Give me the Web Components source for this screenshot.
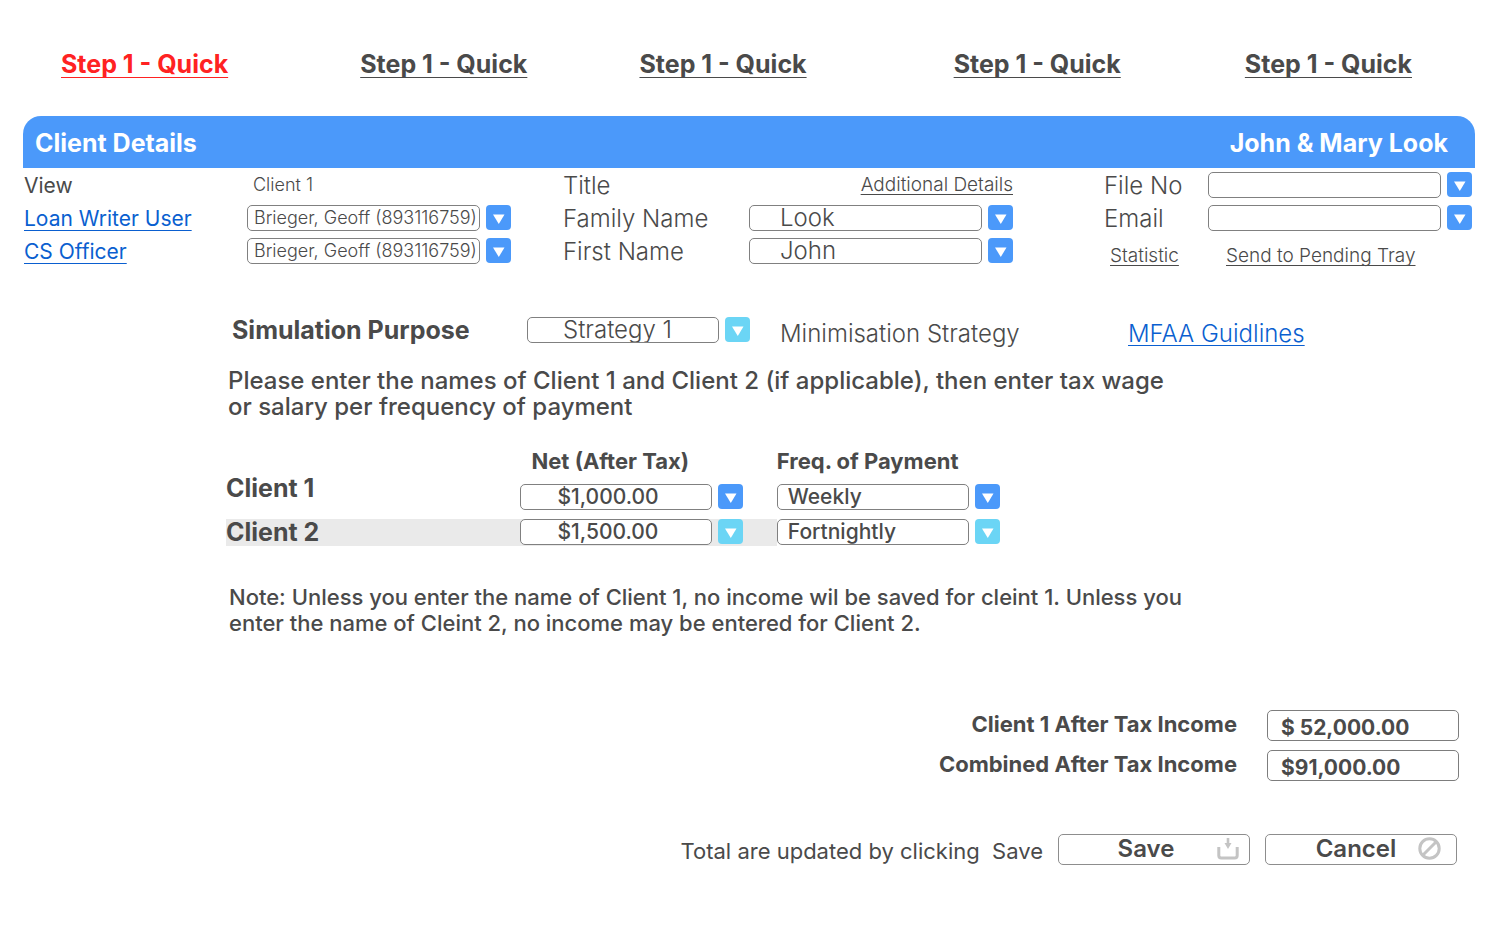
<!DOCTYPE html>
<html lang="en">
<head>
<meta charset="utf-8">
<title>Client Details</title>
<style>
  body { margin: 0; background: #fff; color: #4a4a4a; font-family: Inter, "Open Sans", sans-serif; }
</style>
</head>
<body>
<client-page></client-page>
<script>
const define = (name, html, setup) => {
  const template = document.createElement('template');
  template.innerHTML = html;
  customElements.define(name, class extends HTMLElement {
    constructor() {
      super();
      this.attachShadow({ mode: 'open' }).append(template.content.cloneNode(true));
    }
    connectedCallback() { if (setup) setup(this, this.shadowRoot); }
  });
};

const picker = `
  <div class="pick">
    <select id="control"><option></option></select>
    <button type="button" aria-label="Open list"><svg viewBox="0 0 25 25" width="25" height="25" aria-hidden="true"><path d="M7 9.500h11.500L12.800 19z" fill="#fff"/></svg></button>
  </div>`;
const pickerCss = `
  * { box-sizing: border-box; }
  .pick { display: flex; gap: 6px; align-items: flex-start; width: 100%; max-width: var(--pick-width, 264px); }
  select { flex: 1; min-width: 0; height: 26px; margin: 0; padding: 0 0 0 var(--inset, 6px); border: 1px solid #808080; border-radius: 5px;
    background: #fff; color: inherit; font: var(--value-font, 300 18px/24px Inter, sans-serif); appearance: none; }
  .pick button { flex: none; width: 25px; height: 25px; padding: 0; border: 0; border-radius: 4px; background: var(--arrow, #4b99fa); }
  svg { display: block; }`;
const setupPicker = (host, root) => {
  const select = root.querySelector('select');
  select.options[0].textContent = host.getAttribute('value') || '';
  const name = host.getAttribute('name');
  if (name) select.setAttribute('aria-label', name);
  root.querySelector('button').onclick = () => select.showPicker();
};

define('step-link', `
  <style>
    :host { display: block; }
    a { color: inherit; font: 700 25px/28px Inter, sans-serif; text-decoration: underline; text-decoration-thickness: 1px; text-underline-offset: 4px; text-decoration-skip-ink: none; white-space: nowrap; }
  </style>
  <a href="#"><slot></slot></a>`);

define('text-link', `
  <style>
    :host { display: inline-block; font-size: 19px; line-height: 22px; font-weight: 300; white-space: nowrap; }
    :host([kind="main"]) { color: #0a5fd0; font-size: 24px; line-height: 26px; }
    a { color: inherit; text-decoration: underline; text-decoration-thickness: 1px; text-underline-offset: 3px; text-decoration-skip-ink: none; }
  </style>
  <a href="#"><slot></slot></a>`);

define('pick-list', `<style>:host { display: block; }${pickerCss}</style>${picker}`, setupPicker);

define('pick-field', `
  <style>
    :host { display: contents; }
    ${pickerCss}
    label { padding-top: 2px; font-size: 24px; line-height: 26px; white-space: nowrap; }
    :host([linked]) label { color: #0a5fd0; font-size: 21px; font-weight: 400; }
    a { color: inherit; text-decoration: underline; text-decoration-thickness: 1px; text-underline-offset: 4px; text-decoration-skip-ink: none; }
  </style>
  <label for="control"><slot></slot></label>${picker}`, (host, root) => {
  setupPicker(host, root);
  if (host.hasAttribute('linked')) {
    const label = root.querySelector('label');
    const link = document.createElement('a');
    link.href = '#';
    link.append(label.firstChild);
    label.append(link);
  }
});

define('panel-header', `
  <style>
    :host { display: flex; justify-content: space-between; align-items: center; box-sizing: border-box; height: 52px; padding: 2px 27px 0 12px; border-radius: 18px 18px 0 0; background: #4b99fa; color: #fff; }
    h1, ::slotted(span) { margin: 0; font: 700 25px/30px Inter, sans-serif; }
  </style>
  <h1><slot></slot></h1><slot name="names"></slot>`);

define('client-details', `
  <style>
    :host { display: grid; grid-template-columns: 223fr 316fr 186fr 355fr 104fr 264fr; grid-auto-rows: 33px; align-items: center; padding: 0 3px 0 1px; font-weight: 300; }
    .label { padding-top: 2px; font-size: 24px; line-height: 26px; }
    .view { font-size: 21px; font-weight: 400; }
    .small { font-size: 18px; line-height: 22px; padding-left: 6px; }
    .more { justify-self: start; width: 264px; text-align: right; }
    .low { align-self: end; }
    .low.indent { padding-left: 6px; }
    .low.wide { padding-left: 18px; }
    .big { --inset: 30px; --value-font: 300 24px/24px Inter, sans-serif; }
  </style>
  <span class="label view">View</span><span class="small">Client 1</span>
  <span class="label">Title</span><text-link class="more">Additional Details</text-link>
  <pick-field>File No</pick-field>
  <pick-field linked value="Brieger, Geoff (893116759)">Loan Writer User</pick-field>
  <pick-field class="big" value="Look">Family Name</pick-field>
  <pick-field>Email</pick-field>
  <pick-field linked value="Brieger, Geoff (893116759)">CS Officer</pick-field>
  <pick-field class="big" value="John">First Name</pick-field>
  <text-link class="low indent">Statistic</text-link><text-link class="low wide">Send to Pending Tray</text-link>`);

define('simulation-purpose', `
  <style>
    :host { display: block; --pick-width: 223px; }
    .row { display: grid; grid-template-columns: 301fr 253fr 348fr 347fr; align-items: center; }
    h2 { margin: 0; padding-left: 6px; font: 700 25px/30px Inter, sans-serif; }
    pick-list { --arrow: #6bd5f5; --inset: 35px; --value-font: 300 24px/24px Inter, sans-serif; }
    .row > span { font-size: 24px; line-height: 26px; font-weight: 300; padding-top: 8px; }
    .row > text-link { padding-top: 8px; }
    p { margin: 21px 0 0; padding-left: 2px; font: 500 24px/26px Inter, sans-serif; }
  </style>
  <div class="row">
    <h2>Simulation Purpose</h2>
    <pick-list name="Simulation Purpose" value="Strategy 1"></pick-list>
    <span>Minimisation Strategy</span>
    <text-link kind="main">MFAA Guidlines</text-link>
  </div>
  <p>Please enter the names of Client 1 and Client 2 (if applicable), then enter tax wage<br>or salary per frequency of payment</p>`);

define('income-table', `
  <style>
    :host { display: block; --pick-width: 223px; --value-font: 500 21px/24px Inter, sans-serif; }
    table { width: 100%; table-layout: fixed; border-collapse: collapse; }
    th, td { box-sizing: border-box; padding: 0; text-align: left; vertical-align: top; }
    thead th { height: 27px; font: 700 22px/26px Inter, sans-serif; white-space: nowrap; }
    thead span { padding-left: 12px; }
    tbody th { font: 700 25px/26px Inter, sans-serif; }
    .name { width: 23.5%; }
    .net { width: 20.6%; }
    .first td { height: 44px; padding-top: 9px; }
    .second td { height: 27px; }
    .second .shade { background: #eaeaea; }
    .second { --arrow: #6bd5f5; }
    td.net { --inset: 37px; }
    td.freq { --inset: 10px; }
  </style>
  <table>
    <thead><tr><td class="name"></td><th class="net" scope="col"><span>Net (After Tax)</span></th><th scope="col">Freq. of Payment</th></tr></thead>
    <tbody>
      <tr class="first"><th scope="row">Client 1</th>
        <td class="net"><pick-list name="Client 1 net" value="$1,000.00"></pick-list></td>
        <td class="freq"><pick-list name="Client 1 frequency" value="Weekly"></pick-list></td></tr>
      <tr class="second"><th class="shade" scope="row">Client 2</th>
        <td class="net shade"><pick-list name="Client 2 net" value="$1,500.00"></pick-list></td>
        <td class="freq"><pick-list name="Client 2 frequency" value="Fortnightly"></pick-list></td></tr>
    </tbody>
  </table>`);

define('total-field', `
  <style>
    :host { display: flex; justify-content: flex-end; align-items: flex-start; gap: 30px; }
    label { font: 700 22px/28px Inter, sans-serif; }
    input { box-sizing: border-box; width: 192px; height: 31px; margin: 0; padding: 3px 0 0 13px; border: 1px solid #7d7d7d; border-radius: 5px; background: #fff; color: inherit; font: 700 21px/26px Inter, sans-serif; }
  </style>
  <label for="total"><slot></slot></label><input id="total" readonly>`, (host, root) => {
  root.querySelector('input').value = host.getAttribute('value');
});

define('action-button', `
  <style>
    :host { display: block; }
    button { display: flex; align-items: center; box-sizing: border-box; width: 192px; height: 31px; padding: 0 10px 2px 16px; border: 1px solid #8d8d8d; border-radius: 5px; background: #fff; color: inherit; font: 600 24px/28px Inter, sans-serif; }
    .label { flex: 1; text-align: center; }
    ::slotted(svg) { display: block; flex: none; }
    :host([inset]) button { padding: 0 15px 2px 28px; }
  </style>
  <button type="button"><span class="label"><slot></slot></span><slot name="icon"></slot></button>`);

define('client-page', `
  <style>
    :host { display: block; padding: 50px 25px 80px 23px; }
    nav { display: grid; grid-template-columns: 300fr 280fr 315fr 292fr 164fr; padding: 0 63px 0 38px; margin-bottom: 38px; }
    .active { color: #ff2222; }
    section { margin-left: 203px; }
    simulation-purpose { margin-top: 46px; }
    income-table { margin-top: 28px; }
    .note { margin: 38px 0 0; padding-left: 3px; font: 500 22px/26px Inter, sans-serif; }
    .totals { display: grid; gap: 9px; margin-top: 74px; padding-right: 16px; }
    .actions { display: flex; justify-content: flex-end; align-items: center; gap: 15px; margin-top: 53px; padding-right: 18px; }
    .actions p { margin: 0; padding-top: 3px; font: 400 22px/26px Inter, sans-serif; white-space: pre; }
  </style>
  <nav>
    <step-link class="active">Step 1 - Quick</step-link>
    <step-link>Step 1 - Quick</step-link>
    <step-link>Step 1 - Quick</step-link>
    <step-link>Step 1 - Quick</step-link>
    <step-link>Step 1 - Quick</step-link>
  </nav>
  <panel-header>Client Details<span slot="names">John &amp; Mary Look</span></panel-header>
  <client-details></client-details>
  <section>
    <simulation-purpose></simulation-purpose>
    <income-table></income-table>
    <p class="note">Note: Unless you enter the name of Client 1, no income wil be saved for cleint 1. Unless you<br>enter the name of Cleint 2, no income may be entered for Client 2.</p>
  </section>
  <div class="totals">
    <total-field value="$ 52,000.00">Client 1 After Tax Income</total-field>
    <total-field value="$91,000.00">Combined After Tax Income</total-field>
  </div>
  <div class="actions">
    <p>Total are updated by clicking  Save</p>
    <action-button>Save<svg slot="icon" width="22" height="22" viewBox="0 0 22 22" aria-hidden="true"><path d="M1.800 9v8.500q0 2.500 2.500 2.500h13.400q2.500 0 2.500-2.500V9" fill="none" stroke="#c4c4c4" stroke-width="3"/><path d="M9.700 0h2.600v5h2.200l-3.500 6-3.500-6h2.200z" fill="#c4c4c4"/></svg></action-button>
    <action-button inset>Cancel<svg slot="icon" width="23" height="23" viewBox="0 0 23 23" aria-hidden="true"><g fill="none" stroke="#c4c4c4" stroke-width="3"><circle cx="11.500" cy="11.500" r="9.700"/><path d="M5 18 18 5"/></g></svg></action-button>
  </div>`);
</script>
</body>
</html>
